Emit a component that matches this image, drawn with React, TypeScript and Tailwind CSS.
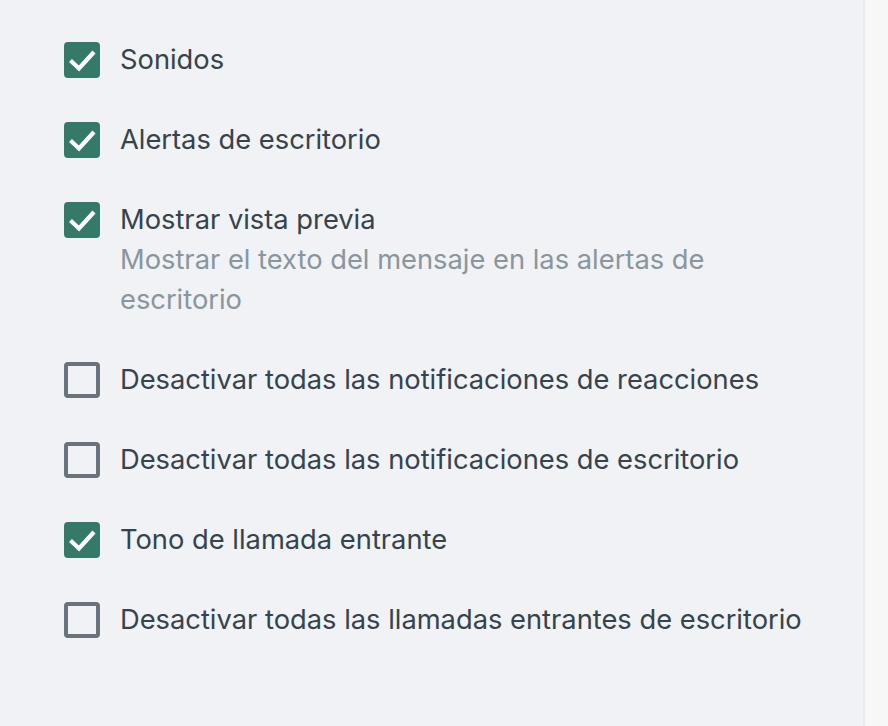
import React from 'react';

interface Option {
  label: string;
  description?: string;
  checked: boolean;
}

const options: Option[] = [
  { label: 'Sonidos', checked: true },
  { label: 'Alertas de escritorio', checked: true },
  {
    label: 'Mostrar vista previa',
    description: 'Mostrar el texto del mensaje en las alertas de escritorio',
    checked: true,
  },
  { label: 'Desactivar todas las notificaciones de reacciones', checked: false },
  { label: 'Desactivar todas las notificaciones de escritorio', checked: false },
  { label: 'Tono de llamada entrante', checked: true },
  { label: 'Desactivar todas las llamadas entrantes de escritorio', checked: false },
];

const Checkbox: React.FC<{ checked: boolean }> = ({ checked }) =>
  checked ? (
    <span className="block w-[36px] h-[36px] rounded-[4px] bg-[#35796a] shrink-0">
      <svg width="36" height="36" viewBox="0 0 36 36" fill="none" stroke="white" strokeWidth="4.2">
        <path d="M6.5 18.5l8.5 8L30 10" />
      </svg>
    </span>
  ) : (
    <span className="block w-[36px] h-[36px] rounded-[4px] border-[4px] border-[#6a737b] shrink-0" />
  );

export default function App() {
  return (
    <div className="flex w-[888px] h-[726px] bg-[#f7f7f7]" style={{ fontFamily: 'Inter, "Noto Sans", sans-serif' }}>
      <div className="w-[865px] h-full bg-[#f0f2f5] border-r-2 border-[#e9ebee] pl-[64px] pt-[40px]">
        <div className="flex flex-col gap-[40px]">
          {options.map((o) => (
            <div key={o.label} className="flex items-start gap-[20px]">
              <div className="h-[40px] flex items-center">
                <Checkbox checked={o.checked} />
              </div>
              <div className="text-[27.3px] leading-[40px] w-[700px]">
                <div className="text-[#36434d]">{o.label}</div>
                {o.description && <div className="text-[#8a959e]">{o.description}</div>}
              </div>
            </div>
          ))}
        </div>
      </div>
    </div>
  );
}
